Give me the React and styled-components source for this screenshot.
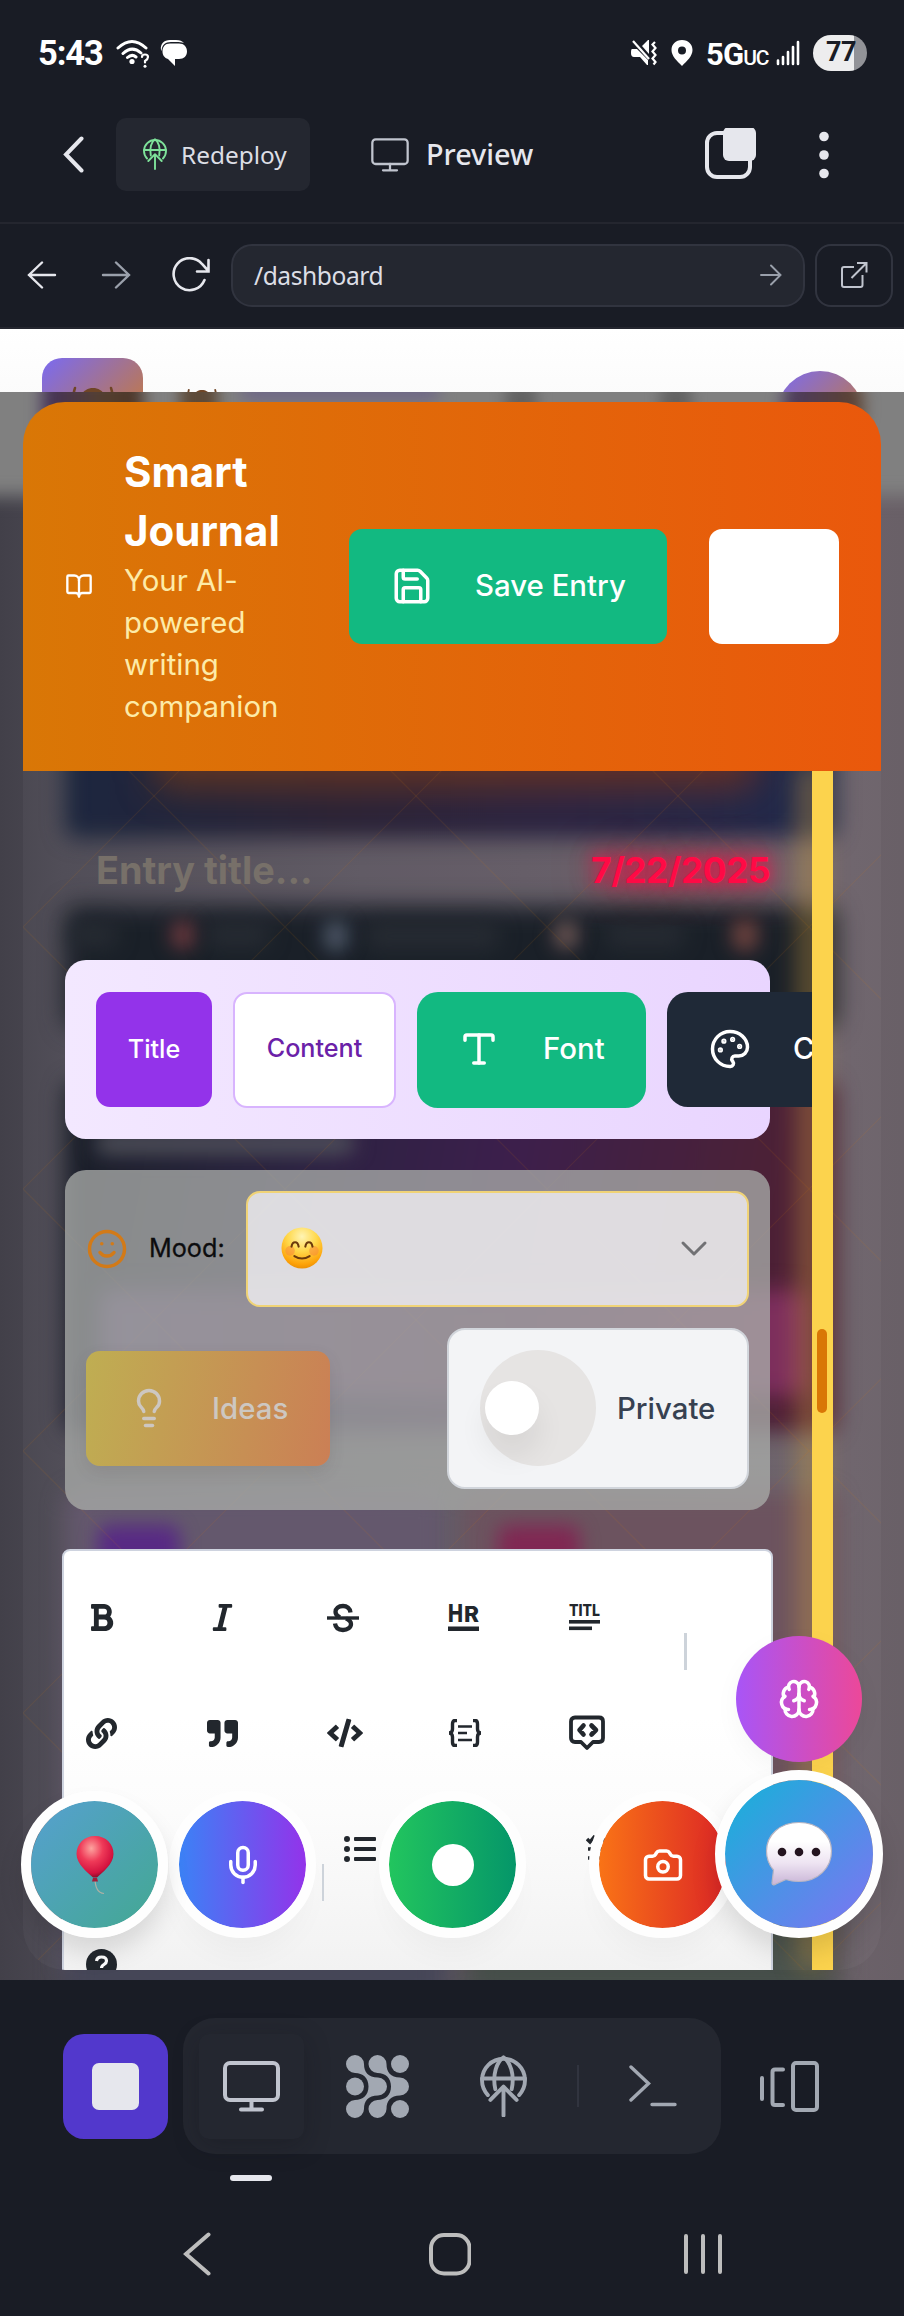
import React from "react";
import styled, { createGlobalStyle } from "styled-components";
import {
  Save, BookOpen, Type, Palette, Smile,
  Lightbulb, Mic, Camera, Brain,
} from "lucide-react";
import { FaBold, FaItalic, FaLink, FaQuoteRight, FaCode, FaListUl } from "react-icons/fa";

const GlobalStyle = createGlobalStyle`
  * { box-sizing: border-box; }
  body { margin: 0; background: #191c25; font-family: Inter, sans-serif; }
  svg { display: block; flex: none; }
`;

const Screen = styled.div`
  width: 904px;
  height: 2316px;
  display: flex;
  flex-direction: column;
  overflow: hidden;
  background: #191c25;
  color: #e6e7ed;
`;

/* ---------- phone status bar ---------- */
const StatusBar = styled.div`
  height: 108px;
  padding: 0 37px 2px 38px;
  display: flex;
  align-items: center;
  justify-content: space-between;
  font-family: Roboto, sans-serif;
  color: #fff;
`;
const StatusGroup = styled.div`
  display: flex;
  align-items: center;
  gap: ${(p) => p.$gap}px;
`;
const Clock = styled.span`
  font-size: 34.5px;
  font-weight: 700;
  letter-spacing: -1.1px;
  width: 65px;
  margin-right: 3px;
  white-space: nowrap;
`;
const Network = styled.span`
  font-size: 31px;
  font-weight: 700;
  letter-spacing: -0.9px;
  width: 62px;
  white-space: nowrap;
  padding-top: 3px;
  small { font-size: 21px; font-weight: 500; letter-spacing: -1px; }
`;
const Battery = styled.span`
  width: 54px;
  height: 36px;
  border-radius: 18px;
  background: linear-gradient(90deg, #ededee 76%, #929398 76%);
  color: #191c25;
  font-size: 27px;
  font-weight: 700;
  line-height: 35px;
  padding-left: 2px;
  text-align: center;
  letter-spacing: -0.5px;
`;

/* ---------- workspace header ---------- */
const Header = styled.div`
  height: 116px;
  padding: 10px 0 0 63px;
  display: flex;
  align-items: flex-start;
  border-bottom: 2px solid #24262f;
`;
const HeaderSlot = styled.div`
  height: 73px;
  display: flex;
  align-items: center;
  margin-left: ${(p) => p.$ml || 0}px;
`;
const DeployButton = styled.button`
  width: 194px;
  height: 73px;
  margin-left: 31px;
  padding: 0 0 1px 27px;
  display: flex;
  align-items: center;
  gap: 14px;
  border: 0;
  border-radius: 10px;
  background: #242730;
  color: #dcdee5;
  font: 400 24.4px "Noto Sans", sans-serif;
`;
const PreviewLabel = styled.span`
  width: 110px;
  margin-left: 17px;
  padding-bottom: 3px;
  white-space: nowrap;
  font: 500 28.8px "Noto Sans", sans-serif;
`;

const AddressBar = styled.div`
  height: 105px;
  padding: 0 11px 1px 25px;
  display: flex;
  align-items: center;
  border-bottom: 2px solid #24262f;
`;
const NavIcons = styled.div`
  width: 206px;
  display: flex;
  align-items: center;
  gap: 39px;
`;
const UrlField = styled.div`
  width: 574px;
  height: 63px;
  padding: 0 20px 0 21px;
  display: flex;
  align-items: center;
  justify-content: space-between;
  border: 2px solid #31343f;
  border-radius: 21px;
  background: #242730;
  color: #dcdee5;
  font: 400 24.6px "Noto Sans", sans-serif;
  letter-spacing: -0.45px;
`;
const ExternalButton = styled.button`
  width: 78px;
  height: 63px;
  margin-left: 10px;
  padding: 0;
  display: flex;
  align-items: center;
  justify-content: center;
  border: 2px solid #31343f;
  border-radius: 16px;
  background: none;
`;

/* ---------- previewed page ---------- */
const Viewport = styled.main`
  position: relative;
  height: 1651px;
  overflow: hidden;
  background: #fff;
`;
const PageTop = styled.div`
  height: 180px;
  padding: 29px 41px 0 42px;
  display: flex;
  justify-content: space-between;
  background: linear-gradient(#fff, #fbfbfb 70px);
`;
const BrandTile = styled.div`
  width: 101px;
  height: 101px;
  padding-top: 26px;
  display: flex;
  justify-content: center;
  border-radius: 20px;
  background: linear-gradient(135deg, #7a6af2, #c57a3c 80%);
`;
const BrandMark = styled.div`
  flex: 1;
  padding: 29px 0 0 37px;
`;
const Avatar = styled.div`
  width: 86px;
  height: 86px;
  margin-top: 13px;
  border-radius: 50%;
  background: linear-gradient(135deg, #7a6af2, #c57a3c 85%);
`;

const Backdrop = styled.div`
  position: absolute;
  inset: 63px 0 0;
  z-index: 0;
  overflow: hidden;
  background: linear-gradient(90deg, #424049 0, #4b4852 7%, #5c5560 40%, #6b6169 94%, #696067 100%);
  &::after {
    content: "";
    position: absolute;
    inset: -30px -30px auto;
    height: 134px;
    background: #808080;
    filter: blur(9px);
  }
`;
const Blob = styled.div`
  position: absolute;
  left: ${(p) => p.$x}px;
  top: ${(p) => p.$y}px;
  width: ${(p) => p.$w}px;
  height: ${(p) => p.$h}px;
  border-radius: ${(p) => p.$r || 12}px;
  background: ${(p) => p.$bg};
  filter: blur(${(p) => p.$blur || 11}px);
  z-index: ${(p) => p.$z || 0};
`;

const Modal = styled.section`
  position: absolute;
  z-index: 1;
  left: 23px;
  top: 73px;
  width: 858px;
  height: 1568px;
  border-radius: 42px;
  overflow: hidden;
  display: flex;
  flex-direction: column;
`;
const ModalHeader = styled.header`
  height: 369px;
  flex: none;
  padding: 0 42px 1px;
  display: flex;
  align-items: center;
  background: linear-gradient(90deg, #d97706, #ea580c);
  color: #fff;
`;
const Heading = styled.div`
  width: 160px;
  margin-left: 31px;
  padding-bottom: 1px;
`;
const Title = styled.h2`
  margin: 0;
  font-size: 42px;
  line-height: 58.8px;
  font-weight: 700;
`;
const Subtitle = styled.p`
  margin: 0;
  width: 170px;
  font-size: 29.4px;
  line-height: 42px;
  color: #fdeba8;
`;
const SaveButton = styled.button`
  width: 318px;
  height: 115px;
  margin-left: 65px;
  padding: 0 0 1px 42px;
  display: flex;
  align-items: center;
  gap: 42px;
  border: 0;
  border-radius: 13px;
  background: #12b981;
  color: #fff;
  font: 500 29.4px Inter, sans-serif;
  white-space: nowrap;
`;
const BlankButton = styled.button`
  width: 130px;
  height: 115px;
  margin-left: 42px;
  border: 0;
  border-radius: 13px;
  background: #fff;
`;

const ModalBody = styled.div`
  flex: 1;
  min-height: 0;
  display: flex;
  background-color: rgba(255, 255, 255, 0.035);
  background-image:
    linear-gradient(45deg, transparent calc(50% - 1px), rgba(217, 119, 6, 0.1) 50%, transparent calc(50% + 1px)),
    linear-gradient(-45deg, transparent calc(50% - 1px), rgba(217, 119, 6, 0.1) 50%, transparent calc(50% + 1px));
  background-size: 262px 262px;
  background-position: 0 156px;
`;
const Content = styled.div`
  width: 789px;
  padding-left: 42px;
  overflow: hidden;
`;
const ScrollTrack = styled.div`
  width: 21px;
  padding: 558px 6px 0 5px;
  background: #fcd34d;
`;
const ScrollThumb = styled.div`
  height: 84px;
  border-radius: 5px;
  background: #d97706;
`;
const EntryRow = styled.div`
  width: 705px;
  height: 189px;
  padding: 9px 0 0 31px;
  display: flex;
  align-items: center;
  justify-content: space-between;
  font-size: 37.8px;
  font-weight: 700;
`;
const EntryTitle = styled.span`
  color: #777069;
`;
const EntryDate = styled.span`
  color: #ff0a45;
  font-size: 35.5px;
  font-weight: 700;
  letter-spacing: -0.6px;
  text-shadow: 0 0 12px rgba(255, 10, 69, 0.5), 0 0 22px rgba(255, 10, 69, 0.9), 0 0 42px rgba(255, 10, 69, 0.6);
`;
const StyleBar = styled.div`
  width: 705px;
  height: 179px;
  padding-left: 31px;
  display: flex;
  align-items: center;
  gap: 21px;
  border-radius: 21px;
  background: linear-gradient(90deg, #f3e8ff, #e9d5ff);
`;
const StyleButton = styled.button`
  flex: none;
  width: ${(p) => p.$w}px;
  height: ${(p) => p.$h || 115}px;
  padding: 0 0 ${(p) => p.$pb || 2}px ${(p) => p.$pl || 0}px;
  display: flex;
  align-items: center;
  justify-content: ${(p) => (p.$pl ? "flex-start" : "center")};
  gap: ${(p) => p.$gap || 0}px;
  border: ${(p) => (p.$border ? `2px solid ${p.$border}` : 0)};
  border-radius: ${(p) => p.$r || 14}px;
  background: ${(p) => p.$bg};
  color: ${(p) => p.$fg || "#fff"};
  font: 500 ${(p) => p.$fs || 25.2}px Inter, sans-serif;
`;
const OptionsPanel = styled.div`
  width: 705px;
  height: 340px;
  margin-top: 31px;
  padding: 21px;
  border-radius: 21px;
  background: rgba(168, 170, 168, 0.78);
`;
const MoodRow = styled.div`
  display: flex;
  align-items: center;
`;
const MoodLabel = styled.span`
  width: 97px;
  margin-left: 21px;
  padding-bottom: 3px;
  font-size: 25.2px;
  font-weight: 400;
  color: #0c0c0e;
  -webkit-text-stroke: 0.3px #0c0c0e;
`;
const MoodSelect = styled.div`
  width: 503px;
  height: 116px;
  padding: 0 35px 2px 33px;
  display: flex;
  align-items: center;
  justify-content: space-between;
  border: 2px solid #f0d376;
  border-radius: 14px;
  background: rgba(247, 246, 248, 0.76);
`;
const ActionRow = styled.div`
  margin-top: 21px;
  display: flex;
  align-items: center;
  justify-content: space-between;
`;
const IdeasButton = styled.button`
  width: 244px;
  height: 115px;
  padding: 0 0 1px 42px;
  display: flex;
  align-items: center;
  gap: 42px;
  border: 0;
  border-radius: 14px;
  background: linear-gradient(100deg, #bfae52, #cb7f55);
  box-shadow: 0 6px 16px rgba(70, 60, 60, 0.12);
  color: #cdc7c1;
  font: 500 29.4px Inter, sans-serif;
`;
const PrivateCard = styled.div`
  width: 302px;
  height: 161px;
  padding: 0 0 1px 31px;
  display: flex;
  align-items: center;
  gap: 21px;
  border: 2px solid #d1d5db;
  border-radius: 18px;
  background: #f3f4f6;
  color: #374151;
  font-size: 29.4px;
  font-weight: 500;
`;
const Toggle = styled.div`
  width: 116px;
  height: 116px;
  padding-left: 5px;
  display: flex;
  align-items: center;
  border-radius: 50%;
  background: #e6e4e3;
`;
const Knob = styled.div`
  width: 54px;
  height: 54px;
  border-radius: 50%;
  background: #fff;
  box-shadow: 0 20px 30px rgba(0, 0, 0, 0.07);
`;
const Editor = styled.div`
  width: 711px;
  height: 480px;
  margin: 39px 0 0 -3px;
  padding: 9px 0 0 22px;
  border: 2px solid #ced3df;
  border-radius: 8px;
  background: linear-gradient(#fff 35%, #fcfcfc 55%, #f2f2f2 88%);
`;
const ToolRow = styled.div`
  height: 115.5px;
  display: flex;
  align-items: center;
  color: #22272d;
`;
const Tool = styled.div`
  width: ${(p) => p.$w || 120.7}px;
  height: 36px;
  padding-left: ${(p) => p.$pl || 0}px;
  display: flex;
  align-items: center;
`;
const ToolDivider = styled.div`
  width: ${(p) => p.$w || 3}px;
  height: 37px;
  margin: ${(p) => p.$mt || 68}px 20px 0 ${(p) => p.$ml || 0}px;
  background: #cdd3da;
`;

const Fab = styled.button`
  position: absolute;
  z-index: 2;
  left: ${(p) => p.$cx - p.$r}px;
  top: ${(p) => p.$cy - p.$r}px;
  width: ${(p) => p.$r * 2}px;
  height: ${(p) => p.$r * 2}px;
  padding: 0;
  display: flex;
  align-items: center;
  justify-content: center;
  border: ${(p) => (p.$ring ? "10px solid #fefefe" : 0)};
  border-radius: 50%;
  background: ${(p) => p.$bg} padding-box;
  box-shadow: ${(p) => p.$shadow || "0 26px 34px -14px rgba(0, 0, 0, 0.04)"};
  color: #fff;
`;
const RecordDot = styled.span`
  width: 42px;
  height: 42px;
  border-radius: 50%;
  background: #fff;
`;

/* ---------- bottom dock ---------- */
const Dock = styled.div`
  height: 174px;
  padding: 38px 0 0 63px;
  display: flex;
  align-items: flex-start;
`;
const StopButton = styled.button`
  width: 105px;
  height: 105px;
  margin-top: 16px;
  padding: 0;
  display: flex;
  align-items: center;
  justify-content: center;
  border: 0;
  border-radius: 21px;
  background: #5238cc;
`;
const StopSquare = styled.span`
  width: 47px;
  height: 47px;
  border-radius: 7px;
  background: #e6e7ed;
`;
const DockPill = styled.div`
  width: 538px;
  height: 136px;
  margin-left: 15px;
  padding-left: 16px;
  display: flex;
  align-items: center;
  border-radius: 32px;
  background: #242730;
`;
const DockItem = styled.div`
  width: 105px;
  height: 105px;
  margin: ${(p) => p.$mt || 0}px 0 0 ${(p) => p.$ml || 0}px;
  display: flex;
  align-items: center;
  justify-content: center;
  border-radius: 10px;
  box-shadow: ${(p) => (p.$active ? "0 6px 26px rgba(15, 17, 24, 0.3)" : "none")};
  background: ${(p) => (p.$active ? "#242730" : "none")};
`;
const DockDivider = styled.div`
  width: 2px;
  height: 42px;
  margin-left: 21px;
  background: #31343f;
`;
const IndicatorRow = styled.div`
  padding: 21px 0 0 230px;
  height: 52px;
`;
const Indicator = styled.div`
  width: 42px;
  height: 6px;
  border-radius: 3px;
  background: #e6e7ed;
`;
const SystemNav = styled.nav`
  height: 96px;
  padding: 0 181px 0 183px;
  display: flex;
  align-items: center;
  justify-content: space-between;
`;

const GlobeUp = ({ w, h, color, sw }) => (
  <svg width={w} height={h} viewBox="0 0 24 32" fill="none" stroke={color} strokeWidth={sw} strokeLinejoin="round" strokeLinecap="round">
    <path d="M4 20.5A11 11 0 1 1 20 20.5" />
    <path d="M1 12h22M7.8 17.5C6.2 10 8.5 3.500 12 1.200C15.500 3.500 17.800 10 16.200 17.500" />
    <path d="M12 31V16.500M5.300 23L12 16.200L18.700 23" />
  </svg>
);

const Monitor = ({ w, h, sw }) => (
  <svg width={w} height={h} viewBox="0 0 57 51" fill="none" stroke="#c0c4ce" strokeWidth={sw} strokeLinecap="round">
    <rect x="2" y="2" width="53" height="37" rx="5" />
    <path d="M28.500 39V48M18 48.500H39" />
  </svg>
);

const HornedMark = ({ w }) => (
  <svg width={w} height={w} viewBox="0 0 60 60">
    <path d="M12 4C9 12 12 22 16 24M48 4C51 12 48 22 44 24" fill="none" stroke="#6f4526" strokeWidth="2.500" strokeLinecap="round" />
    <path d="M12 40C12 14 20 4 30 4S48 14 48 40V60H12Z" fill="#6f4526" />
    <path d="M17 40C17 18 22 9 30 9S43 18 43 40V60H17Z" fill="#c98a63" />
  </svg>
);

const HappyFace = () => (
  <svg width="42" height="42" viewBox="0 0 44 44">
    <defs>
      <radialGradient id="face" cx="0.5" cy="0.22" r="0.8">
        <stop offset="0" stopColor="#fff4b4" /><stop offset="0.45" stopColor="#ffd84a" /><stop offset="0.85" stopColor="#fda209" /><stop offset="1" stopColor="#e88d06" />
      </radialGradient>
    </defs>
    <circle cx="22" cy="22" r="21.500" fill="url(#face)" />
    <circle cx="9.500" cy="25" r="5" fill="#f8843a" opacity=".5" /><circle cx="34.500" cy="25" r="5" fill="#f8843a" opacity=".5" />
    <path d="M11 20.500C12 14.500 17.500 14.500 18.500 20.500M25.500 20.500C26.500 14.500 32 14.500 33 20.500M14 30.500Q22 35.500 30 30.500" fill="none" stroke="#6b3a0c" strokeWidth="2.200" strokeLinecap="round" />
  </svg>
);

const Balloon = () => (
  <svg width="40" height="60" viewBox="0 0 40 60">
    <defs>
      <radialGradient id="balloon" cx="0.4" cy="0.3" r="0.7">
        <stop offset="0" stopColor="#fda49f" /><stop offset="0.45" stopColor="#ef3a58" /><stop offset="0.85" stopColor="#d3123f" /><stop offset="1" stopColor="#8f0d2c" />
      </radialGradient>
    </defs>
    <path d="M20 43C20 54 24 58 29 58.500" fill="none" stroke="#aeb0a4" strokeWidth="1.200" />
    <path d="M20 1C9 1 1.500 9 1.500 19C1.500 29 13 38 18 42.500H22C27 38 38.500 29 38.500 19C38.500 9 31 1 20 1Z" fill="url(#balloon)" />
    <path d="M18 43H22L23 46.500H17Z" fill="#a31c39" />
  </svg>
);

const ChatBubble = () => (
  <svg width="68" height="66" viewBox="0 0 68 66">
    <defs>
      <linearGradient id="bubble" x1="0" y1="0" x2="0" y2="1">
        <stop offset="0.3" stopColor="#fff" /><stop offset="0.65" stopColor="#eee4f2" /><stop offset="1" stopColor="#c8b4d6" />
      </linearGradient>
    </defs>
    <path d="M34 1.500C15 1.500 1.500 14 1.500 30C1.500 39 5 45 8.500 49L7 62C7 64 9 64.500 11 63L21 58.500C25 60 29 60.500 34 60.500C53 60.500 66.500 47 66.500 30C66.500 14 53 1.500 34 1.500Z" fill="url(#bubble)" stroke="#b8b5c2" strokeWidth="1.200" />
    <g fill="#24141f"><circle cx="17" cy="31" r="4.300" /><circle cx="34" cy="31" r="4.300" /><circle cx="51" cy="31" r="4.300" /></g>
  </svg>
);

export default function App() {
  return (
    <Screen>
      <GlobalStyle />
      <StatusBar>
        <StatusGroup $gap={10}>
          <Clock>5:43</Clock>
          <svg width="34" height="29" viewBox="0 0 34 29" fill="none" stroke="#fff" strokeWidth="3" strokeLinecap="round">
            <path d="M2 9Q16 -4 30 9M7 14.500Q16 6 25 14M11.500 18.500Q16 14.500 20 18" />
            <circle cx="16" cy="22.500" r="2.600" fill="#fff" stroke="none" />
            <path d="M26 18Q26 15.500 29 15.500Q32 15.500 32 18Q32 20 29 22V23.500" strokeWidth="2.200" />
            <circle cx="29" cy="27.300" r="1.500" fill="#fff" stroke="none" />
          </svg>
          <svg width="28" height="28" viewBox="0 0 28 28" fill="#fff">
            <path d="M1 11C0 5 4 1 10 1H16C20 1 22 2 24 4C20 2.500 16 3 11 3C5 3 2 6 1.500 12Z" />
            <path d="M10 4.500H19C24 4.500 27 8 27 12.500C27 17 24 20 19 20H15V27L8 20C4.500 19 2.500 16 2.500 12.500C2.500 8 5 4.500 10 4.500Z" />
          </svg>
        </StatusGroup>
        <StatusGroup $gap={13}>
          <svg width="27" height="26" viewBox="0 0 27 26" fill="#fff">
            <path d="M1 9H6L17 20V25H16L9 17H3Q0 17 0 13Q0 9 1 9ZM11 6L17 0H18V14Z" />
            <path d="M2 1L18 19" stroke="#fff" strokeWidth="2.200" />
            <path d="M24 2L21.500 4.500L24.500 8L21.500 11.500L24.500 15L21.500 18.500L24.500 22L22.500 24.500" fill="none" stroke="#fff" strokeWidth="2.200" />
          </svg>
          <svg width="22" height="26" viewBox="0 0 22 26">
            <path fillRule="evenodd" fill="#fff" d="M11 0C4.500 0 .5 4.500 .5 10C.5 16 6 21 11 26C16 21 21.500 16 21.500 10C21.500 4.500 17.500 0 11 0ZM11 6.500A4 4 0 1 1 11 14.500A4 4 0 1 1 11 6.500Z" />
          </svg>
          <StatusGroup $gap={8}>
            <Network>5G<small>UC</small></Network>
            <svg width="24" height="26" viewBox="0 0 24 26" stroke="#fff" strokeWidth="2.600" strokeLinecap="round">
              <path d="M2 20.500V24M7 17V24M12 12V24M17 7V24M22 2V24" />
            </svg>
          </StatusGroup>
          <Battery>77</Battery>
        </StatusGroup>
      </StatusBar>

      <Header>
        <HeaderSlot>
          <svg width="22" height="37" viewBox="0 0 22 37" fill="none" stroke="#e6e7ed" strokeWidth="4" strokeLinecap="round">
            <path d="M18.500 2.500L3 18.500L18.500 34.500" />
          </svg>
        </HeaderSlot>
        <DeployButton><GlobeUp w={24} h={32} color="#7ee29a" sw={1.900} />Redeploy</DeployButton>
        <HeaderSlot $ml={61}>
          <Monitor w={38} h={34} sw={3.400} />
          <PreviewLabel>Preview</PreviewLabel>
        </HeaderSlot>
        <HeaderSlot $ml={168}>
          <svg width="54" height="54" viewBox="0 0 54 54">
            <rect x="3" y="5" width="43" height="44" rx="10" fill="none" stroke="#e6e7ed" strokeWidth="4" />
            <rect x="19" y="-1" width="33" height="34" rx="6" fill="#e6e7ed" />
          </svg>
        </HeaderSlot>
        <HeaderSlot $ml={60}>
          <svg width="12" height="48" viewBox="0 0 12 48" fill="#e6e7ed">
            <circle cx="6" cy="5.500" r="4.800" /><circle cx="6" cy="24" r="4.800" /><circle cx="6" cy="42.500" r="4.800" />
          </svg>
        </HeaderSlot>
      </Header>

      <AddressBar>
        <NavIcons>
          <svg width="34" height="28" viewBox="0 0 34 28" fill="none" stroke="#e6e7ed" strokeWidth="2.400" strokeLinecap="round"><path d="M17 1.500L4 14L17 26.500M4 14H30" /></svg>
          <svg width="34" height="28" viewBox="0 0 34 28" fill="none" stroke="#9aa0ab" strokeWidth="2.400" strokeLinecap="round"><path d="M18 1.500L31 14L18 26.500M31 14H5" /></svg>
          <svg width="40" height="36" viewBox="0 0 40 36" fill="none" stroke="#e6e7ed" strokeWidth="2.600" strokeLinecap="round"><path d="M33.500 23A16 16 0 1 1 31 7L37.500 14M37.500 3V14.500H26" /></svg>
        </NavIcons>
        <UrlField>
          /dashboard
          <svg width="24" height="22" viewBox="0 0 24 22" fill="none" stroke="#9aa0ab" strokeWidth="1.900" strokeLinecap="round"><path d="M12 1.500L21.500 11L12 20.500M21.500 11H2" /></svg>
        </UrlField>
        <ExternalButton>
          <svg width="28" height="28" viewBox="0 0 28 28" fill="none" stroke="#c0c4ce" strokeWidth="2"><path d="M14 6H4Q2 6 2 8V24Q2 26 4 26H20.500Q22.500 26 22.500 24V14M17 2H26.500V11.500M26 2.500L11.500 17" /></svg>
        </ExternalButton>
      </AddressBar>

      <Viewport>
        <PageTop>
          <BrandTile><HornedMark w={60} /></BrandTile>
          <BrandMark><HornedMark w={44} /></BrandMark>
          <Avatar />
        </PageTop>

        <Backdrop>
          <Blob $x={42} $y={-16} $w={101} $h={70} $bg="linear-gradient(90deg,#43305c,#55402f 60%,#4a3428)" $z={1} $blur={8} />
          <Blob $x={180} $y={-16} $w={38} $h={45} $bg="#5d4a38" $z={1} $blur={7} />
          <Blob $x={240} $y={-14} $w={200} $h={24} $bg="#6f6886" $z={1} $blur={8} />
          <Blob $x={505} $y={-10} $w={32} $h={35} $bg="#626262" $z={1} $blur={7} />
          <Blob $x={660} $y={-10} $w={32} $h={35} $bg="#626262" $z={1} $blur={7} />
          <Blob $x={783} $y={-30} $w={80} $h={90} $r={40} $bg="linear-gradient(90deg,#4a3a63,#5e422c)" $z={1} $blur={8} />
          <Blob $x={65} $y={290} $w={771} $h={156} $bg="linear-gradient(90deg,#141f38 0,#231c2f 35%,#241d3c 65%,#182346)" />
          <Blob $x={155} $y={290} $w={600} $h={105} $bg="linear-gradient(90deg,#5a2e1c,#5f281f)" $blur={18} />
          <Blob $x={65} $y={514} $w={771} $h={122} $bg="#121821" $blur={12} />
          <Blob $x={70} $y={530} $w={48} $h={26} $bg="#1e242b" $blur={10} />
          <Blob $x={170} $y={528} $w={26} $h={30} $r={14} $bg="#603035" $blur={9} />
          <Blob $x={205} $y={530} $w={65} $h={26} $bg="#1e242b" $blur={10} />
          <Blob $x={323} $y={528} $w={26} $h={32} $r={14} $bg="#434d5d" $blur={9} />
          <Blob $x={365} $y={530} $w={135} $h={28} $bg="#1e242b" $blur={10} />
          <Blob $x={553} $y={528} $w={26} $h={30} $r={14} $bg="#614c4b" $blur={9} />
          <Blob $x={605} $y={530} $w={80} $h={26} $bg="#1e242b" $blur={10} />
          <Blob $x={731} $y={526} $w={28} $h={34} $r={14} $bg="#633936" $blur={9} />
          <Blob $x={65} $y={690} $w={771} $h={350} $bg="linear-gradient(100deg,#10161f 0,#241a3b 30%,#351746 55%,#451930 85%,#4a162d)" />
          <Blob $x={95} $y={740} $w={260} $h={22} $bg="#4a4b55" $blur={10} />
          <Blob $x={100} $y={898} $w={708} $h={106} $bg="linear-gradient(90deg,#4d3568,#5c2a55 60%,#7d2858)" $blur={11} />
          <Blob $x={65} $y={1100} $w={380} $h={480} $bg="#5f5268" />
          <Blob $x={462} $y={1100} $w={375} $h={480} $bg="#674d5a" />
          <Blob $x={98} $y={1133} $w={82} $h={82} $bg="#522380" $blur={9} />
          <Blob $x={498} $y={1133} $w={82} $h={82} $bg="#7c214d" $blur={9} />
          <Blob $x={65} $y={1530} $w={382} $h={90} $bg="#454657" $blur={14} />
          <Blob $x={465} $y={1490} $w={372} $h={120} $bg="#454e49" $blur={14} />
          <Blob $x={800} $y={370} $w={22} $h={1208} $bg="rgba(205,155,55,0.5)" $blur={13} />
        </Backdrop>

        <Modal>
          <ModalHeader>
            <BookOpen size={28} strokeWidth={2} />
            <Heading>
              <Title>Smart Journal</Title>
              <Subtitle>Your AI-powered writing companion</Subtitle>
            </Heading>
            <SaveButton><Save size={42} strokeWidth={2} />Save Entry</SaveButton>
            <BlankButton />
          </ModalHeader>
          <ModalBody>
            <Content>
              <EntryRow>
                <EntryTitle>Entry title...</EntryTitle>
                <EntryDate>7/22/2025</EntryDate>
              </EntryRow>
              <StyleBar>
                <StyleButton $w={116} $bg="#9333ea">Title</StyleButton>
                <StyleButton $w={163} $h={116} $pb={4} $bg="#fff" $fg="#6b21a8" $border="#d8b4fe">Content</StyleButton>
                <StyleButton $w={229} $h={116} $r={21} $bg="#12b981" $pl={41} $gap={43} $fs={29.400}><Type size={42} strokeWidth={2} />Font</StyleButton>
                <StyleButton $w={260} $r={21} $bg="#1f2937" $pl={42} $gap={42} $fs={29.400}><Palette size={42} strokeWidth={2} />Color</StyleButton>
              </StyleBar>
              <OptionsPanel>
                <MoodRow>
                  <Smile size={42} strokeWidth={2} color="#d27a18" />
                  <MoodLabel>Mood:</MoodLabel>
                  <MoodSelect>
                    <HappyFace />
                    <svg width="36" height="20" viewBox="0 0 36 20" fill="none" stroke="#717174" strokeWidth="3" strokeLinecap="round" strokeLinejoin="round"><path d="M7 5L18 16L29 5" /></svg>
                  </MoodSelect>
                </MoodRow>
                <ActionRow>
                  <IdeasButton><Lightbulb size={42} strokeWidth={2} />Ideas</IdeasButton>
                  <PrivateCard><Toggle><Knob /></Toggle>Private</PrivateCard>
                </ActionRow>
              </OptionsPanel>
              <Editor>
                <ToolRow>
                  <Tool $pl={2}><FaBold size={31} viewBox="32 0 384 512" /></Tool>
                  <Tool><FaItalic size={31} /></Tool>
                  <Tool>
                    <svg width="32" height="30" viewBox="0 0 32 30" fill="none" stroke="currentColor" strokeWidth="4.300">
                      <path d="M23.500 9.500C23 5.500 20 3 16 3C11.500 3 8.500 5.500 8.500 9C8.500 11 10 13 13 14.500M8 20.500C8.500 24.500 11.500 27 16 27C20.500 27 24 24.500 24 21C24 19 22.500 17 19 15.500" />
                      <path d="M0 15H32" strokeWidth="3.400" />
                    </svg>
                  </Tool>
                  <Tool>
                    <svg width="32" height="29" viewBox="0 0 32 29" fill="currentColor" overflow="visible">
                      <text x="0" y="19" fontFamily="Inter, sans-serif" fontWeight="800" fontSize="25" textLength="15" lengthAdjust="spacingAndGlyphs">H</text>
                      <text x="16" y="19" fontFamily="Inter, sans-serif" fontWeight="800" fontSize="22" textLength="15" lengthAdjust="spacingAndGlyphs">R</text>
                      <rect y="23.500" width="31" height="4.500" />
                    </svg>
                  </Tool>
                  <Tool $w={115}>
                    <svg width="32" height="29" viewBox="0 0 32 29" fill="currentColor" overflow="visible">
                      <text x="0" y="13" fontFamily="Inter, sans-serif" fontWeight="800" fontSize="16.500" textLength="31" lengthAdjust="spacingAndGlyphs">TITL</text>
                      <rect y="17" width="31" height="3.600" /><rect y="23.500" width="23" height="3.600" />
                    </svg>
                  </Tool>
                  <ToolDivider />
                </ToolRow>
                <ToolRow>
                  <Tool><FaLink size={31} /></Tool>
                  <Tool><FaQuoteRight size={31} /></Tool>
                  <Tool><FaCode size={36} /></Tool>
                  <Tool>
                    <svg width="34" height="28" viewBox="0 0 34 28" fill="none" stroke="currentColor" strokeWidth="3.400">
                      <path d="M9 1.500H7Q4.500 1.500 4.500 5V10Q4.500 14 1 14Q4.500 14 4.500 18V23Q4.500 26.500 7 26.500H9M25 1.500H27Q29.500 1.500 29.500 5V10Q29.500 14 33 14Q29.500 14 29.500 18V23Q29.500 26.500 27 26.500H25" />
                      <path d="M10 7.500H24M10 14H19M10 21H24" strokeWidth="2.600" />
                    </svg>
                  </Tool>
                  <Tool>
                    <svg width="36" height="36" viewBox="0 0 36 36" fill="none" stroke="currentColor" strokeWidth="3.800" strokeLinejoin="round" strokeLinecap="round">
                      <path d="M6 2.500H30Q34 2.500 34 6.500V23Q34 27 30 27H24L18 33L12 27H6Q2 27 2 23V6.500Q2 2.500 6 2.500Z" />
                      <path d="M14.500 10.500L10.500 15L14.500 19.500M22.500 10.500L27 15L22.500 19.500" strokeWidth="4.600" />
                    </svg>
                  </Tool>
                </ToolRow>
                <ToolRow>
                  <ToolDivider $w={2} $ml={236} $mt={67} />
                  <Tool $w={242}><FaListUl size={32} /></Tool>
                  <Tool>
                    <svg width="30" height="28" viewBox="0 0 30 28" fill="none" stroke="currentColor" strokeWidth="3.500"><path d="M1 4L4 7L9 1M2 14H6M2 23H6M12 5H30M12 14H30M12 23H30" /></svg>
                  </Tool>
                </ToolRow>
                <ToolRow>
                  <Tool>
                    <svg width="31" height="31" viewBox="0 0 31 31">
                      <circle cx="15.500" cy="15.500" r="15.500" fill="#22272d" />
                      <path d="M10.500 12Q11 8 15.500 8Q20.500 8 20.500 12Q20.500 14 18 15.500Q15.500 17 15.500 19" fill="none" stroke="#fff" strokeWidth="3.200" /><circle cx="15.500" cy="23.500" r="2" fill="#fff" />
                    </svg>
                  </Tool>
                </ToolRow>
              </Editor>
            </Content>
            <ScrollTrack><ScrollThumb /></ScrollTrack>
          </ModalBody>
        </Modal>

        <Fab $cx={242.500} $cy={1535.500} $r={73.500} $ring $bg="linear-gradient(90deg,#3b82f6,#9333ea)"><Mic size={42} strokeWidth={2} /></Fab>
        <Fab $cx={94.500} $cy={1535.500} $r={73.500} $ring $shadow="0 16px 26px -2px rgba(0, 0, 0, 0.13)" $bg="linear-gradient(135deg,#56a0d0,#43a892)"><Balloon /></Fab>
        <Fab $cx={452.500} $cy={1535.500} $r={73.500} $ring $bg="linear-gradient(90deg,#22c55e,#059669)"><RecordDot /></Fab>
        <Fab $cx={662.500} $cy={1535.500} $r={73.500} $ring $bg="linear-gradient(90deg,#f97316,#dc2626)"><Camera size={42} strokeWidth={2} /></Fab>
        <Fab $cx={799} $cy={1370} $r={63} $shadow="0 8px 26px rgba(0, 0, 0, 0.04)" $bg="linear-gradient(90deg,#a855f7,#ec4899)"><Brain size={42} strokeWidth={2} /></Fab>
        <Fab $cx={799} $cy={1525} $r={84} $ring $shadow="0 16px 28px -2px rgba(0, 0, 0, 0.13)" $bg="linear-gradient(135deg,#14b3d8,#7f73f3)"><ChatBubble /></Fab>
      </Viewport>

      <Dock>
        <StopButton><StopSquare /></StopButton>
        <DockPill>
          <DockItem $active><Monitor w={57} h={51} sw={4} /></DockItem>
          <DockItem $ml={21}>
            <svg width="63" height="63" viewBox="0 0 63 63" fill="#a2a8b2">
              <path d="M9 0A9 9 0 0 1 18 9C18 17 22 22.500 32 22.500A9 9 0 0 1 32 40.500C22 40.500 18 46 18 54A9 9 0 1 1 9 45C17 45 22.500 40 22.500 31.500S17 18 9 18A9 9 0 0 1 9 0Z" />
              <path d="M31.500 0A9 9 0 0 1 40.500 9C40.500 17 44.500 22.500 54 22.500A9 9 0 0 1 54 40.500C44.500 40.500 40.500 46 40.500 54A9 9 0 1 1 31.500 45C39.500 45 45 40 45 31.500S39.500 18 31.500 18A9 9 0 0 1 31.500 0Z" />
              <circle cx="9" cy="31.500" r="9" /><circle cx="54" cy="9" r="9" /><circle cx="54" cy="54" r="9" />
            </svg>
          </DockItem>
          <DockItem $ml={21}><GlobeUp w={47} h={62.500} color="#a2a8b2" sw={2} /></DockItem>
          <DockDivider />
          <DockItem $ml={21}>
            <svg width="48" height="42" viewBox="0 0 48 42" fill="none" stroke="#a2a8b2" strokeWidth="3.400" strokeLinecap="round"><path d="M2 2L19.500 18.500L2 35M23 39.500H46" /></svg>
          </DockItem>
        </DockPill>
        <DockItem $ml={15} $mt={16}>
          <svg width="60" height="51" viewBox="0 0 60 51" fill="none" stroke="#a2a8b2" strokeWidth="4" strokeLinecap="round">
            <rect x="34" y="2" width="24" height="47" rx="3" /><path d="M24 8.500H16Q13.500 8.500 13.500 11V41.500Q13.500 44 16 44H24M3 17V38" />
          </svg>
        </DockItem>
      </Dock>
      <IndicatorRow><Indicator /></IndicatorRow>
      <SystemNav>
        <svg width="28" height="44" viewBox="0 0 28 44" fill="none" stroke="#bdbdbd" strokeWidth="4" strokeLinecap="round"><path d="M25.500 2.500L3 22L25.500 41.500" /></svg>
        <svg width="48" height="44" viewBox="-5 0 48 44" fill="none" stroke="#bdbdbd" strokeWidth="4"><rect x="3" y="3" width="38.500" height="38.500" rx="13" /></svg>
        <svg width="40" height="42" viewBox="0 0 40 42" stroke="#bdbdbd" strokeWidth="4" strokeLinecap="round"><path d="M3 3V39M20 3V39M37 3V39" /></svg>
      </SystemNav>
    </Screen>
  );
}
